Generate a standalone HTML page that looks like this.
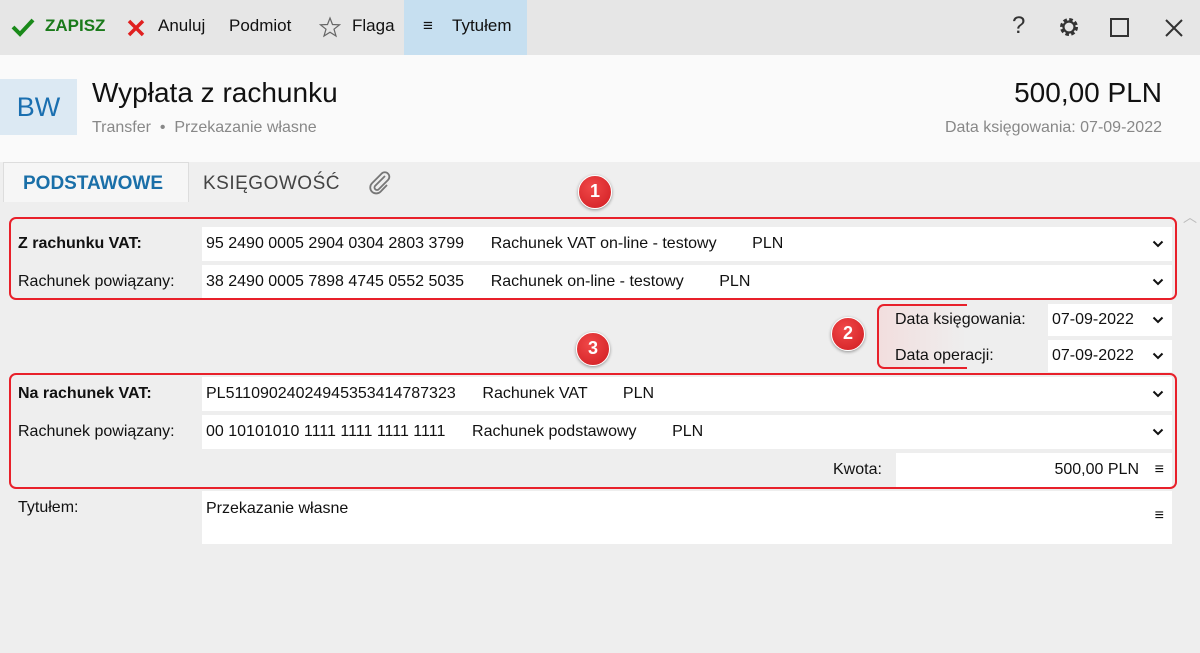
<!DOCTYPE html>
<html><head><meta charset="utf-8"><style>
*{box-sizing:border-box;margin:0;padding:0}
body{width:1200px;height:653px;overflow:hidden;background:#eeeeee;font-family:"Segoe UI","Liberation Sans",sans-serif;font-size:16px;color:#111;position:relative}
.a{position:absolute}
.tb{left:0;top:0;width:1200px;height:55px;background:#e6e6e6}
.tb span{position:absolute;top:16px;font-size:17px}
.hd{left:0;top:55px;width:1200px;height:107px;background:#fafafa}
.inp{position:absolute;background:#fff;height:34px;line-height:34px;padding-left:4px;white-space:pre;font-size:16px}
.chev{position:absolute;right:8px;top:13px;width:12px;height:8px}
.lbl{position:absolute;font-size:16px}
.red{position:absolute;border:2px solid #e8202a;border-radius:7px}
.badge{position:absolute;width:34px;height:34px;border-radius:50%;background:radial-gradient(circle at 40% 35%,#f04848,#d01c22);color:#fff;font-weight:bold;font-size:18px;text-align:center;line-height:31px;box-shadow:0 1px 3px rgba(0,0,0,.4);border:1.5px solid #fff}
</style></head><body>
<svg width="0" height="0" style="position:absolute"><defs><symbol id="cv" viewBox="0 0 12 8"><path d="M1.5 1.5L6 6L10.5 1.5" fill="none" stroke="#111" stroke-width="2"/></symbol></defs></svg>
<div class="a tb">
<svg class="a" style="left:11px;top:17px" width="24" height="20" viewBox="0 0 24 20"><path d="M2 10 L9 17 L22 3" stroke="#1a8a1a" stroke-width="4" fill="none"/></svg>
<span style="left:45px;color:#1a7a1a;font-weight:bold">ZAPISZ</span>
<svg class="a" style="left:126px;top:18px" width="20" height="20"><path d="M3 3L17 17M17 3L3 17" stroke="#e02020" stroke-width="3.5"/></svg>
<span style="left:158px">Anuluj</span>
<span style="left:229px">Podmiot</span>
<svg class="a" style="left:319px;top:16px" width="22" height="22" viewBox="0 0 22 22"><path d="M11 2L13.5 8.5L20.5 8.8L15 13.2L17 20L11 16.2L5 20L7 13.2L1.5 8.8L8.5 8.5Z" fill="none" stroke="#666" stroke-width="1.2"/></svg>
<span style="left:352px">Flaga</span>
<div class="a" style="left:404px;top:0;width:123px;height:55px;background:#c6dff0"></div>
<span style="left:423px">≡</span><span style="left:452px">Tytułem</span>
<span style="left:1012px;font-size:24px;top:12px;color:#333">?</span>
<svg class="a" style="left:1058px;top:16px" width="22" height="22" viewBox="0 0 22 22"><circle cx="11" cy="11" r="7" fill="none" stroke="#333" stroke-width="4" stroke-dasharray="3.3 2.2"/><circle cx="11" cy="11" r="5.5" fill="none" stroke="#333" stroke-width="2.2"/></svg>
<div class="a" style="left:1110px;top:18px;width:19px;height:19px;border:2px solid #333"></div>
<svg class="a" style="left:1164px;top:18px" width="20" height="20"><path d="M2 2L18 18M18 2L2 18" stroke="#333" stroke-width="2"/></svg>
</div>
<div class="a hd">
<div class="a" style="left:0;top:24px;width:77px;height:56px;background:#dce9f3;color:#1a6fb0;font-size:27px;line-height:56px;text-align:center">BW</div>
<div class="a" style="left:92px;top:22px;font-size:28px">Wypłata z rachunku</div>
<div class="a" style="left:92px;top:64px;font-size:16px;color:#888">Transfer &nbsp;•&nbsp; Przekazanie własne</div>
<div class="a" style="right:38px;top:22px;font-size:28px">500,00 PLN</div>
<div class="a" style="right:38px;top:64px;font-size:16px;color:#888">Data księgowania: 07-09-2022</div>
</div>
<div class="a" style="left:0;top:162px;width:1200px;height:38px;background:#efefef"></div>
<div class="a" style="left:3px;top:162px;width:186px;height:40px;background:#f6f6f6;border:1px solid #ddd;border-bottom:none"></div>
<div class="a" style="left:23px;top:173px;font-size:19px;font-weight:bold;color:#1a6fa8">PODSTAWOWE</div>
<div class="a" style="left:203px;top:173px;font-size:19px;color:#444;letter-spacing:0.5px">KSIĘGOWOŚĆ</div>
<svg class="a" style="left:366px;top:169px" width="26" height="26" viewBox="0 0 26 26"><path d="M19 7L9 17a2.5 2.5 0 0 0 3.5 3.5L22 11a4.5 4.5 0 0 0-6.4-6.4L6 14.2a6 6 0 0 0 8.5 8.5L21 16" fill="none" stroke="#777" stroke-width="1.8"/></svg>
<div class="a" style="left:1183px;top:207px;font-size:14px;color:#bbb">︿</div>

<div class="lbl" style="left:18px;top:235px;font-weight:bold">Z rachunku VAT:</div>
<div class="inp" style="left:202px;top:227px;width:970px">95 2490 0005 2904 0304 2803 3799      Rachunek VAT on-line - testowy        PLN<svg class="chev"><use href="#cv"/></svg></div>
<div class="lbl" style="left:18px;top:273px">Rachunek powiązany:</div>
<div class="inp" style="left:202px;top:265px;width:970px">38 2490 0005 7898 4745 0552 5035      Rachunek on-line - testowy        PLN<svg class="chev"><use href="#cv"/></svg></div>
<div class="red" style="left:9px;top:217px;width:1168px;height:83px"></div>

<div class="a" style="left:877px;top:304px;width:90px;height:65px;border:2px solid #e8202a;border-right:none;border-radius:7px 0 0 7px;background:linear-gradient(90deg,#f2dede,#eeeeee)"></div>
<div class="lbl" style="left:895px;top:311px">Data księgowania:</div>
<div class="lbl" style="left:895px;top:347px">Data operacji:</div>
<div class="inp" style="left:1048px;top:304px;width:124px;height:32px;line-height:32px">07-09-2022<svg class="chev" style="top:12px"><use href="#cv"/></svg></div>
<div class="inp" style="left:1048px;top:340px;width:124px;height:32px;line-height:32px">07-09-2022<svg class="chev" style="top:12px"><use href="#cv"/></svg></div>

<div class="lbl" style="left:18px;top:385px;font-weight:bold">Na rachunek VAT:</div>
<div class="inp" style="left:202px;top:377px;width:970px">PL51109024024945353414787323      Rachunek VAT        PLN<svg class="chev"><use href="#cv"/></svg></div>
<div class="lbl" style="left:18px;top:423px">Rachunek powiązany:</div>
<div class="inp" style="left:202px;top:415px;width:970px">00 10101010 1111 1111 1111 1111      Rachunek podstawowy        PLN<svg class="chev"><use href="#cv"/></svg></div>
<div class="lbl" style="left:833px;top:461px">Kwota:</div>
<div class="inp" style="left:896px;top:453px;width:276px;text-align:right;padding-right:33px">500,00 PLN<span style="position:absolute;right:8px">≡</span></div>
<div class="red" style="left:9px;top:373px;width:1168px;height:116px"></div>

<div class="lbl" style="left:18px;top:499px">Tytułem:</div>
<div class="a" style="left:202px;top:491px;width:970px;height:53px;background:#fff;padding:9px 4px">Przekazanie własne<span style="position:absolute;right:8px;top:16px">≡</span></div>

<div class="badge" style="left:578px;top:175px">1</div>
<div class="badge" style="left:831px;top:317px">2</div>
<div class="badge" style="left:576px;top:332px">3</div>
</body></html>
